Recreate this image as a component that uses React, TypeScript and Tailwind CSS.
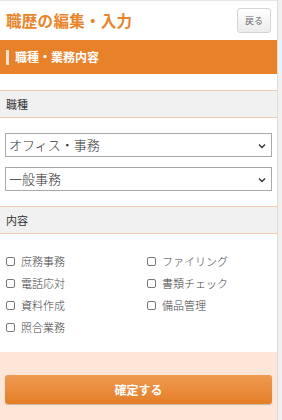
import React from "react";

const font = { fontFamily: '"Noto Sans CJK JP", "Noto Sans", sans-serif' };

const items: string[][] = [
  ["庶務事務", "ファイリング"],
  ["電話応対", "書類チェック"],
  ["資料作成", "備品管理"],
  ["照合業務"],
];

const SectionHead = ({ label }: { label: string }) => (
  <div className="h-[28px] flex items-center px-[6px] bg-[#f1f1f1] border-y border-[#efc9ae] text-[11px] text-[#333]">
    {label}
  </div>
);

const Select = ({ value }: { value: string }) => (
  <div className="relative h-[24px] mx-[5px] border border-[#aaa] bg-white flex items-center pl-[3px] text-[13px] font-light text-[#333]">
    {value}
    <svg className="absolute right-[5px] top-[9px]" width="8" height="6" viewBox="0 0 8 6">
      <path d="M1 1.5 L4 4.5 L7 1.5" stroke="#333" strokeWidth="1.4" fill="none" />
    </svg>
  </div>
);

const Check = ({ label }: { label: string }) => (
  <label className="flex items-center gap-[6px] text-[11px] font-light text-[#444]">
    <span className="w-[9px] h-[9px] border border-[#777] rounded-[2px] bg-white" />
    {label}
  </label>
);

export default function App() {
  return (
    <div className="w-[282px] h-[420px] flex bg-white overflow-hidden" style={font}>
      <div className="w-[277px] flex flex-col border-t border-[#e6e6e6]">
        <div className="h-[39px] flex items-center justify-between pl-[6px] pr-[6px]">
          <h1 className="text-[15.5px] font-bold text-[#e8842a] tracking-[0.3px]">職歴の編集・入力</h1>
          <button className="w-[34px] h-[25px] rounded-[3px] border border-[#d4d4d4] bg-gradient-to-b from-white to-[#ececec] text-[9px] text-[#666]">
            戻る
          </button>
        </div>
        <div className="h-[34px] bg-[#e8822a] flex items-center pl-[6px] gap-[6px]">
          <span className="w-[3px] h-[15px] bg-[#fbe3cf]" />
          <span className="text-[12px] font-bold text-white">職種・業務内容</span>
        </div>
        <div className="h-[16px]" />
        <SectionHead label="職種" />
        <div className="pt-[15px] flex flex-col gap-[10px]">
          <Select value="オフィス・事務" />
          <Select value="一般事務" />
        </div>
        <div className="h-[15px]" />
        <SectionHead label="内容" />
        <div className="pt-[19px] pl-[6px] flex flex-col gap-[8px]">
          {items.map((row, i) => (
            <div key={i} className="grid grid-cols-[141px_1fr] h-[14px]">
              {row.map((l) => (
                <Check key={l} label={l} />
              ))}
            </div>
          ))}
        </div>
        <div className="flex-1" />
        <div className="h-[68px] bg-[#fbe6d7] pt-[23px] px-[5px]">
          <button className="w-full h-[29px] rounded-[3px] bg-gradient-to-b from-[#ef9a52] to-[#e47e24] shadow-[0_1px_1px_rgba(0,0,0,0.2)] text-[12px] font-bold text-white">
            確定する
          </button>
        </div>
      </div>
      <div className="flex-1 border-l border-[#dcdcdc] bg-[#f0f0f0]" />
    </div>
  );
}
